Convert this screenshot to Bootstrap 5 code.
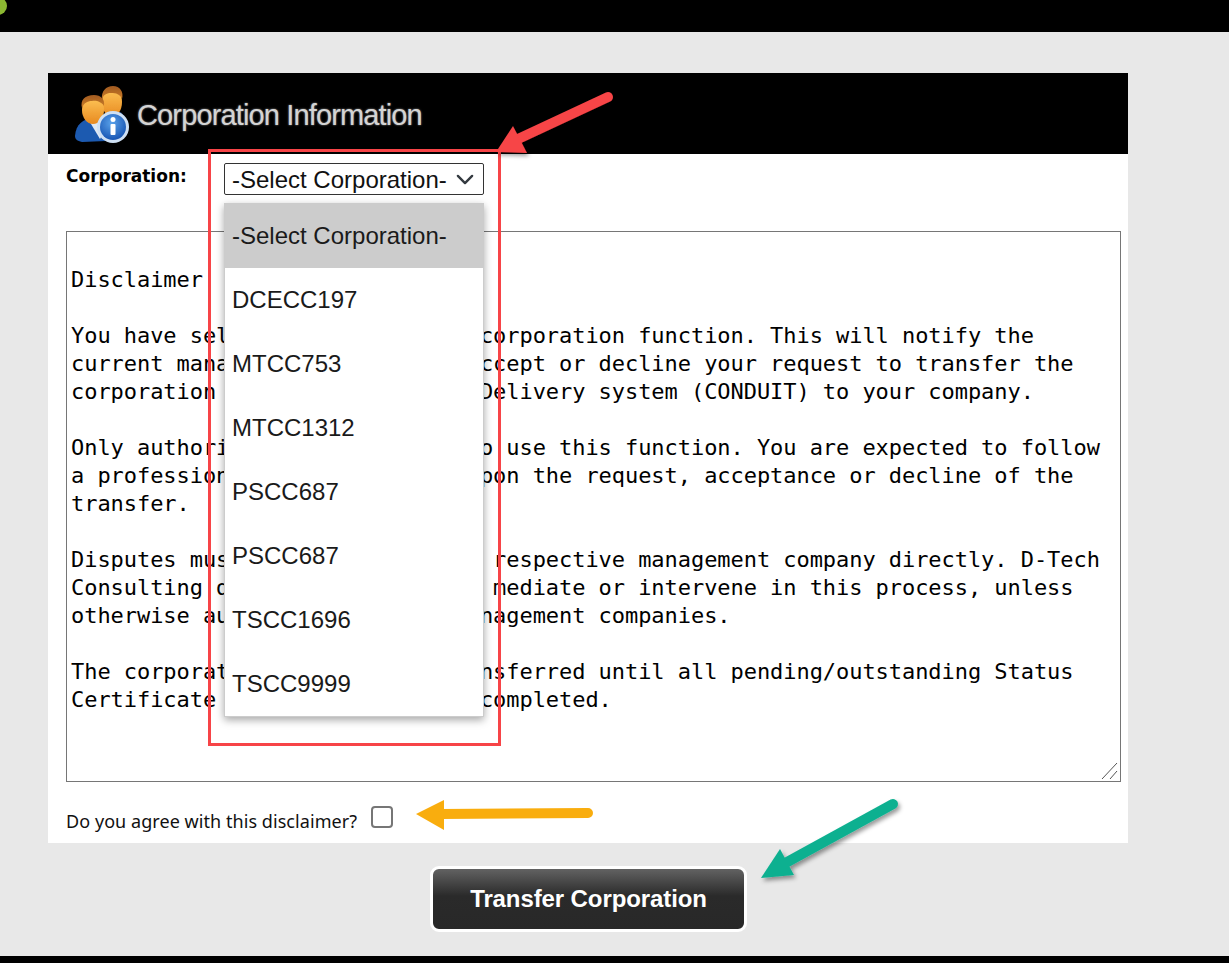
<!DOCTYPE html>
<html lang="en">
<head>
  <meta charset="UTF-8">
  <meta name="viewport" content="width=device-width, initial-scale=1">
  <title>Corporation Information</title>
  <link href="https://cdn.jsdelivr.net/npm/bootstrap@5.3.0/dist/css/bootstrap.min.css" rel="stylesheet">
  <style>
    body {
      background-color: #e8e8e8;
      font-family: "Liberation Sans", Arial, sans-serif;
    }
    .page-wrap {
      position: relative;
      width: 1229px;
      height: 963px;
      overflow: hidden;
    }
    .top-strip {
      height: 32px;
      background-color: #000;
    }
    .bottom-strip {
      height: 7px;
      background-color: #000;
    }
    .corp-panel {
      width: 1080px;
      height: 770px;
      margin: 41px 0 0 48px;
      background-color: #fff;
    }
    .corp-head {
      height: 81px;
      background-color: #000;
      padding-left: 26px;
    }
    .corp-title {
      color: #d4d4d4;
      font-size: 29px;
      letter-spacing: -0.86px;
      margin-left: 5px;
      margin-top: 5px;
      text-shadow: 0 0 2px #999;
    }
    .corp-row {
      padding: 9px 0 0 18px;
      height: 77px;
    }
    .corp-label {
      width: 158px;
      font-family: "DejaVu Sans", sans-serif;
      font-size: 17px;
      font-weight: 700;
      line-height: 26px;
      color: #000;
    }
    .select-wrap {
      position: relative;
      width: 260px;
    }
    .corp-select {
      height: 32px;
      padding: 1px 0 0 7px;
      border: 1px solid #333;
      border-radius: 2px;
      color: #111;
      font-family: "Liberation Sans", Arial, sans-serif;
      font-size: 24px;
      line-height: 30px;
      background-position: right 6px center;
      background-size: 24px 19px;
    }
    .select-list {
      position: absolute;
      top: 40px;
      left: 0;
      width: 260px;
      border: 1px solid #ccc;
      background-color: #fff;
      box-shadow: 0 3px 8px rgba(0, 0, 0, 0.35);
      font-size: 24px;
      color: #1a1a1a;
      z-index: 5;
    }
    .select-item {
      height: 64px;
      line-height: 64px;
      padding-left: 7px;
    }
    .select-item.is-current {
      background-color: #ccc;
    }
    .disclaimer-box {
      display: block;
      width: 1055px;
      height: 551px;
      margin-left: 18px;
      padding: 6px 4px 4px;
      border: 1px solid #767676;
      color: #000;
      font-family: "DejaVu Sans Mono", monospace;
      font-size: 22px;
      letter-spacing: -0.055px;
      line-height: 28px;
      white-space: pre;
      overflow: hidden;
      resize: none;
    }
    .agree-row {
      padding: 24px 0 0 18px;
    }
    .agree-label {
      font-family: "Noto Sans", sans-serif;
      font-size: 18px;
      letter-spacing: 0.06px;
      line-height: 24px;
      margin-top: 3px;
      color: #111;
    }
    .agree-check {
      width: 22px;
      height: 22px;
      margin: 0 0 0 14px;
      border: 2px solid #767676;
      border-radius: 4px;
    }
    .btn-transfer {
      width: 317px;
      height: 66px;
      margin: 23px 0 0 430px;
      padding: 0;
      display: block;
      border: 3px solid #fff;
      border-radius: 9px;
      background: linear-gradient(#626262 0, #2a2a2a 45%, #282828 100%);
      color: #fff;
      font-size: 24px;
      font-weight: 700;
      letter-spacing: -0.1px;
    }
    .btn-transfer:hover {
      background: linear-gradient(#626262 0, #2a2a2a 45%, #282828 100%);
      color: #fff;
      border-color: #fff;
    }
    .notes-layer {
      position: absolute;
      top: 0;
      left: 0;
      z-index: 10;
      pointer-events: none;
    }
    .corner-mark {
      position: absolute;
      top: -3px;
      left: -11px;
      width: 18px;
      height: 18px;
      border-radius: 50%;
      background-color: #8cb832;
    }
  </style>
</head>
<body class="m-0">

  <div class="page-wrap d-flex flex-column">
    <div class="top-strip position-relative">
      <div class="corner-mark"></div>
    </div>

    <div class="corp-panel">
      <div class="corp-head d-flex align-items-center">
        <svg width="58" height="60" viewBox="0 0 58 60">
          <defs>
            <linearGradient id="skin" x1="0" y1="0" x2="0" y2="1">
              <stop offset="0" stop-color="#ffc85a"/>
              <stop offset="1" stop-color="#e88a20"/>
            </linearGradient>
            <linearGradient id="hair" x1="0" y1="0" x2="0" y2="1">
              <stop offset="0" stop-color="#a05a20"/>
              <stop offset="1" stop-color="#cf7f28"/>
            </linearGradient>
            <radialGradient id="infoFill" cx="0.45" cy="0.35" r="0.7">
              <stop offset="0" stop-color="#5aa2ea"/>
              <stop offset="1" stop-color="#1450b0"/>
            </radialGradient>
            <filter id="iconSoft">
              <feGaussianBlur stdDeviation="0.5"/>
            </filter>
          </defs>
          <g filter="url(#iconSoft)">
            <path d="M28 42 C28 32 36 28 46 28 C50 30 51 34 50 42 L44 50 Z" fill="#24508f"/>
            <ellipse cx="38" cy="18" rx="10" ry="15" fill="url(#skin)"/>
            <path d="M28 16 C27 7 32 2 39 2 C46 2 50 8 48 15 C46 10 42 9 37 9 C32 9 29 11 28 16 Z" fill="url(#hair)"/>
            <path d="M1 52 C2 40 9 35 19 34 C28 34 34 38 36 46 L32 57 L8 58 C3 57 1 55 1 52 Z" fill="#1f5ab0"/>
            <path d="M14 35 L23 35 L30 48 L26 55 Z" fill="#dfe8f2"/>
            <ellipse cx="19" cy="26" rx="11" ry="14" fill="url(#skin)"/>
            <path d="M8 24 C6 16 11 11 20 11 C27 11 31 15 30 22 C28 18 22 16 18 17 C13 17 10 19 8 24 Z" fill="url(#hair)"/>
            <circle cx="39" cy="43" r="16" fill="#cfe0f4"/>
            <circle cx="39" cy="43" r="13" fill="url(#infoFill)"/>
            <circle cx="39" cy="35.500" r="2.500" fill="#fff"/>
            <rect x="36.500" y="40" width="5" height="11" rx="1" fill="#fff"/>
          </g>
        </svg>
        <div class="corp-title">Corporation Information</div>
      </div>

      <div class="corp-row d-flex">
        <label class="corp-label" for="corporation">Corporation:</label>
        <div class="select-wrap">
          <select class="form-select corp-select" id="corporation">
            <option>-Select Corporation-</option>
            <option>DCECC197</option>
            <option>MTCC753</option>
            <option>MTCC1312</option>
            <option>PSCC687</option>
            <option>TSCC1696</option>
            <option>TSCC9999</option>
          </select>
          <div class="select-list">
            <div class="select-item is-current">-Select Corporation-</div>
            <div class="select-item">DCECC197</div>
            <div class="select-item">MTCC753</div>
            <div class="select-item">MTCC1312</div>
            <div class="select-item">PSCC687</div>
            <div class="select-item">PSCC687</div>
            <div class="select-item">TSCC1696</div>
            <div class="select-item">TSCC9999</div>
          </div>
        </div>
      </div>

      <textarea class="disclaimer-box" readonly>

Disclaimer

You have selected the transfer corporation function. This will notify the
current management company to accept or decline your request to transfer the
corporation in the Condominium Delivery system (CONDUIT) to your company.

Only authorized personnel are to use this function. You are expected to follow
a professional manner in this upon the request, acceptance or decline of the
transfer.

Disputes must be settled by the respective management company directly. D-Tech
Consulting does not necessarily mediate or intervene in this process, unless
otherwise authorized by both management companies.

The corporation will not be transferred until all pending/outstanding Status
Certificate requests have been completed.</textarea>

      <div class="agree-row d-flex">
        <label class="agree-label" for="agree">Do you agree with this disclaimer?</label>
        <input class="form-check-input agree-check" type="checkbox" id="agree">
      </div>
    </div>

    <button class="btn btn-transfer" type="button">Transfer Corporation</button>
    <div class="bottom-strip mt-auto"></div>

    <svg class="notes-layer" width="1229" height="963" viewBox="0 0 1229 963">
      <defs>
        <filter id="noteShadow" x="-20%" y="-20%" width="140%" height="140%">
          <feDropShadow dx="2" dy="3" stdDeviation="2" flood-color="#000" flood-opacity="0.4"/>
        </filter>
      </defs>
      <!-- textarea resize grip -->
      <path d="M1102 779 L1117 763 M1110 779 L1117 771" stroke="#555" stroke-width="1" fill="none"/>
      <rect x="209.500" y="150.500" width="290" height="594" fill="none" stroke="#f74447" stroke-width="3"/>
      <g filter="url(#noteShadow)">
        <path d="M608 97 L518 139" stroke="#f74447" stroke-width="10" stroke-linecap="round" fill="none"/>
        <path d="M496 152 L513 126 L527 153 Z" fill="#f74447"/>
      </g>
      <path d="M588 813 L440 814" stroke="#f9ad0e" stroke-width="10" stroke-linecap="round" fill="none"/>
      <path d="M416 814 L444 800 L444 830 Z" fill="#f9ad0e"/>
      <g filter="url(#noteShadow)">
        <path d="M893 804 L780 866" stroke="#0db090" stroke-width="10" stroke-linecap="round" fill="none"/>
        <path d="M761 878 L780 849 L794 875 Z" fill="#0db090"/>
      </g>
    </svg>
  </div>

</body>
</html>
